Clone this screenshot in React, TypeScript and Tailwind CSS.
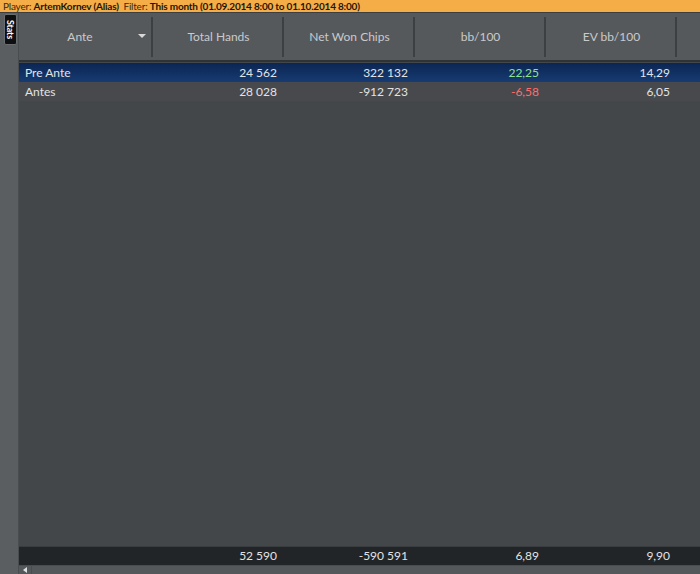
import React from "react";

interface Row {
  name: string;
  hands: string;
  chips: string;
  bb: string;
  ev: string;
  tone: "pos" | "neg";
}

const rows: Row[] = [
  { name: "Pre Ante", hands: "24 562", chips: "322 132", bb: "22,25", ev: "14,29", tone: "pos" },
  { name: "Antes", hands: "28 028", chips: "-912 723", bb: "-6,58", ev: "6,05", tone: "neg" },
];

const headers = ["Total Hands", "Net Won Chips", "bb/100", "EV bb/100"];

export default function App() {
  return (
    <div
      className="w-[700px] h-[574px] overflow-hidden flex flex-col bg-[#44474a] text-[12px]"
      style={{ fontFamily: 'Lato, "Noto Sans", sans-serif' }}
    >
      {/* TOP INFO BAR */}
      <div className="h-[13px] bg-[#f4ad47] flex items-center px-[3px] text-[10px] tracking-[-0.2px] leading-none text-[#3a2a10] whitespace-nowrap border-b border-[#3c3f42]">
        <span>Player:&nbsp;</span>
        <span className="font-bold text-[#1e1608]">ArtemKornev (Alias)</span>
        <span>&nbsp;&nbsp;Filter:&nbsp;</span>
        <span className="font-bold text-[#1e1608]">This month (01.09.2014 8:00 to 01.10.2014 8:00)</span>
      </div>

      <div className="flex flex-1 min-h-0">
        {/* LEFT SIDEBAR */}
        <div className="w-[19px] bg-[#5b5e61] border-r border-[#4a4d50] flex flex-col items-end pr-[1px] pt-[1px]">
          <div className="w-[13px] h-[31px] bg-[#0e0f10] rounded-[2px] border border-[#6a6d70] flex items-center justify-center">
            <span className="rotate-90 text-[9px] leading-none text-white font-bold tracking-tight">Stats</span>
          </div>
        </div>

        {/* GRID */}
        <div className="flex-1 flex flex-col min-w-0">
          {/* HEADER */}
          <div className="h-[49px] bg-[#56595c] flex border-b-2 border-[#303336] text-[#c9cacc]">
            <div className="w-[134px] shrink-0 flex items-center relative">
              <span className="flex-1 text-center pr-[12px]">Ante</span>
              <span className="absolute right-[7px] top-[21px] w-0 h-0 border-l-[4px] border-r-[4px] border-t-[4px] border-l-transparent border-r-transparent border-t-[#d8d8d8]" />
              <div className="absolute right-0 top-[4px] bottom-[3px] w-[2px] bg-[#3d4043]" />
            </div>
            {headers.map((h) => (
              <div key={h} className="w-[131px] shrink-0 flex items-center justify-center relative">
                <span>{h}</span>
                <div className="absolute right-0 top-[4px] bottom-[3px] w-[2px] bg-[#3d4043]" />
              </div>
            ))}
            <div className="flex-1" />
          </div>

          {/* BODY */}
          <div className="flex-1 bg-[#44474a] pt-[1px]">
            {rows.map((r, i) => (
              <div
                key={r.name}
                className={`h-[19px] flex items-center text-[#e2e3e4] ${
                  i === 0 ? "bg-gradient-to-b from-[#0b2653] to-[#173b72]" : "bg-[#47494c]"
                }`}
              >
                <div className="w-[134px] shrink-0 pl-[6px]">{r.name}</div>
                <div className="w-[131px] shrink-0 text-right pr-[7px]">{r.hands}</div>
                <div className="w-[131px] shrink-0 text-right pr-[7px]">{r.chips}</div>
                <div
                  className={`w-[131px] shrink-0 text-right pr-[7px] ${
                    r.tone === "pos" ? "text-[#8fe38f]" : "text-[#ff6e6e]"
                  }`}
                >
                  {r.bb}
                </div>
                <div className="w-[131px] shrink-0 text-right pr-[7px]">{r.ev}</div>
              </div>
            ))}
          </div>

          {/* TOTALS */}
          <div className="h-[19px] bg-[#222528] border-t border-[#3a3d40] flex items-center text-[#e2e3e4]">
            <div className="w-[134px] shrink-0" />
            <div className="w-[131px] shrink-0 text-right pr-[7px]">52 590</div>
            <div className="w-[131px] shrink-0 text-right pr-[7px]">-590 591</div>
            <div className="w-[131px] shrink-0 text-right pr-[7px]">6,89</div>
            <div className="w-[131px] shrink-0 text-right pr-[7px]">9,90</div>
          </div>

          {/* SCROLLBAR */}
          <div className="h-[9px] bg-[#55585b] flex items-center border-t border-[#4a4d50]">
            <div className="w-[13px] h-full flex items-center justify-center border-r border-[#4a4d50]">
              <span className="w-0 h-0 border-t-[3px] border-b-[3px] border-r-[4px] border-t-transparent border-b-transparent border-r-[#e0e0e0]" />
            </div>
          </div>
        </div>
      </div>
    </div>
  );
}
